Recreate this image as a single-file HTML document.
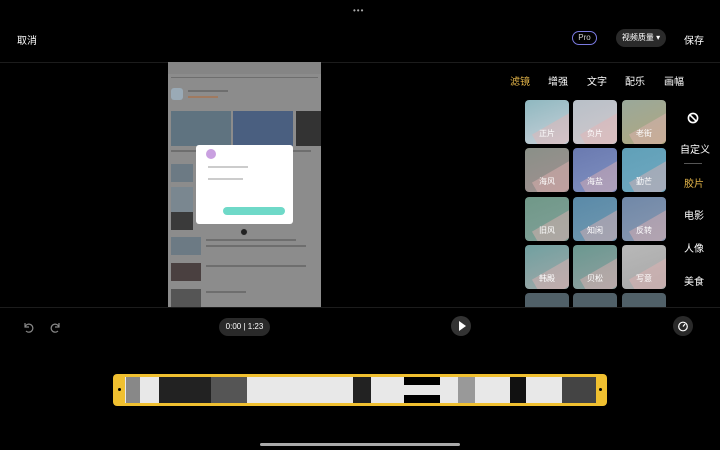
<!DOCTYPE html>
<html><head><meta charset="utf-8"><style>
*{margin:0;padding:0;box-sizing:border-box}
body{width:720px;height:450px;background:#000;overflow:hidden;position:relative;font-family:"Liberation Sans","Noto Sans CJK SC",sans-serif;color:#fff}
.a{position:absolute}
.t{font-size:10px;white-space:nowrap}
.tile{position:absolute;width:44px;height:44px;border-radius:4px;overflow:hidden}
.tile span{position:absolute;bottom:5px;width:100%;text-align:center;font-size:8px;color:#fff;z-index:2}
.tile:after{content:"";position:absolute;left:10px;top:22px;width:44px;height:24px;background:rgba(230,180,180,.45);transform:rotate(-30deg)}
.f{position:absolute;top:377px;height:26px}
.ln{position:absolute;height:2px;background:#6e6e6e}
</style></head><body>
<div class="a" style="left:353px;top:6px;font-size:8px;color:#aaa;letter-spacing:1px">•••</div>
<div class="a t" style="left:17px;top:32px;font-size:10px">取消</div>
<div class="a t" style="left:572px;top:31px;width:25px;height:14px;border:1px solid #7a7ae0;border-radius:8px;font-size:8px;text-align:center;line-height:12px;color:#ccc">Pro</div>
<div class="a t" style="left:616px;top:29px;width:50px;height:18px;background:#2a2a2a;border-radius:9px;font-size:8px;text-align:center;line-height:18px">视频质量 ▾</div>
<div class="a t" style="left:684px;top:32px;font-size:10px">保存</div>
<div class="a" style="left:0;top:62px;width:720px;height:1px;background:#1c1c1c"></div>
<div class="a" style="left:0;top:307px;width:720px;height:1px;background:#1c1c1c"></div>
<!-- preview -->
<div class="a" style="left:168px;top:62px;width:153px;height:245px;background:#8c8c8c;overflow:hidden">
 <div class="a" style="left:0;top:0;width:153px;height:12px;background:#858585"></div>
 <div class="ln" style="left:3px;top:15px;width:147px;height:1px"></div>
 <div class="a" style="left:3px;top:26px;width:12px;height:12px;background:#9aaab6;border-radius:3px"></div>
 <div class="ln" style="left:20px;top:28px;width:40px"></div>
 <div class="ln" style="left:20px;top:34px;width:30px;background:#a07a60"></div>
 <div class="a" style="left:3px;top:49px;width:60px;height:35px;background:#5f7380"></div>
 <div class="a" style="left:65px;top:49px;width:60px;height:35px;background:#4a5f80"></div>
 <div class="a" style="left:128px;top:49px;width:25px;height:35px;background:#333"></div>
 <div class="ln" style="left:3px;top:88px;width:140px"></div>
 <div class="a" style="left:3px;top:102px;width:22px;height:18px;background:#6c7a84"></div>
 <div class="a" style="left:3px;top:125px;width:22px;height:25px;background:#7a8790"></div>
 <div class="a" style="left:3px;top:150px;width:22px;height:18px;background:#3a3a3a"></div>
 <div class="a" style="left:3px;top:175px;width:30px;height:18px;background:#6c7a84"></div>
 <div class="ln" style="left:38px;top:177px;width:90px"></div>
 <div class="ln" style="left:38px;top:183px;width:100px"></div>
 <div class="a" style="left:3px;top:201px;width:30px;height:18px;background:#4a4040"></div>
 <div class="ln" style="left:38px;top:203px;width:100px"></div>
 <div class="a" style="left:3px;top:227px;width:30px;height:18px;background:#555"></div>
 <div class="ln" style="left:38px;top:229px;width:40px"></div>
 <div class="a" style="left:28px;top:83px;width:97px;height:79px;background:#fff;border-radius:3px">
  <div class="a" style="left:10px;top:4px;width:10px;height:10px;border-radius:50%;background:#c9a0e0"></div>
  <div class="a" style="left:12px;top:21px;width:40px;height:2px;background:#ccc"></div>
  <div class="a" style="left:12px;top:33px;width:35px;height:2px;background:#ccc"></div>
  <div class="a" style="left:27px;top:62px;width:62px;height:8px;border-radius:4px;background:#6fd9c8"></div>
 </div>
 <div class="a" style="left:72px;top:166px;width:8px;height:8px;border-radius:50%;background:#222;border:1px solid #888"></div>
</div>
<!-- tabs -->
<div class="a t" style="left:510px;top:73px;color:#e8b84a">滤镜</div>
<div class="a t" style="left:548px;top:73px">增强</div>
<div class="a t" style="left:587px;top:73px">文字</div>
<div class="a t" style="left:625px;top:73px">配乐</div>
<div class="a t" style="left:664px;top:73px">画幅</div>
<!-- grid -->
<div class="tile" style="left:525px;top:100px;background:linear-gradient(160deg,#8fb8c0,#c8d0d8)"><span>正片</span></div>
<div class="tile" style="left:573px;top:100px;background:linear-gradient(160deg,#b8c0c8,#d0c8cc)"><span>负片</span></div>
<div class="tile" style="left:622px;top:100px;background:linear-gradient(160deg,#9aa89a,#b0a880)"><span>老街</span></div>
<div class="tile" style="left:525px;top:148px;background:linear-gradient(160deg,#8a9088,#a09090)"><span>海风</span></div>
<div class="tile" style="left:573px;top:148px;background:linear-gradient(160deg,#6a7ab0,#8090c0)"><span>海盐</span></div>
<div class="tile" style="left:622px;top:148px;background:linear-gradient(160deg,#60a0b8,#70a8c0)"><span>勤芒</span></div>
<div class="tile" style="left:525px;top:197px;background:linear-gradient(160deg,#709888,#80a098)"><span>旧风</span></div>
<div class="tile" style="left:573px;top:197px;background:linear-gradient(160deg,#5a8aa8,#7098b0)"><span>知闲</span></div>
<div class="tile" style="left:622px;top:197px;background:linear-gradient(160deg,#7088a8,#8898b0)"><span>反转</span></div>
<div class="tile" style="left:525px;top:245px;background:linear-gradient(160deg,#70a0a0,#a0a8a8)"><span>韩殿</span></div>
<div class="tile" style="left:573px;top:245px;background:linear-gradient(160deg,#6a9890,#90a0a0)"><span>贝松</span></div>
<div class="tile" style="left:622px;top:245px;background:linear-gradient(160deg,#b8b8b8,#a8a8a8)"><span>写意</span></div>
<div class="a" style="left:525px;top:293px;width:44px;height:14px;background:#506068;border-radius:4px 4px 0 0"></div>
<div class="a" style="left:573px;top:293px;width:44px;height:14px;background:#506068;border-radius:4px 4px 0 0"></div>
<div class="a" style="left:622px;top:293px;width:44px;height:14px;background:#506068;border-radius:4px 4px 0 0"></div>
<!-- side -->
<svg class="a" style="left:687px;top:112px" width="12" height="12" viewBox="0 0 12 12"><circle cx="6" cy="6" r="4.6" fill="none" stroke="#fff" stroke-width="1.6"/><line x1="2.8" y1="2.8" x2="9.2" y2="9.2" stroke="#fff" stroke-width="1.6"/></svg>
<div class="a t" style="left:680px;top:141px">自定义</div>
<div class="a" style="left:684px;top:163px;width:18px;height:1px;background:#555"></div>
<div class="a t" style="left:684px;top:175px;color:#e8b84a">胶片</div>
<div class="a t" style="left:684px;top:207px">电影</div>
<div class="a t" style="left:684px;top:240px">人像</div>
<div class="a t" style="left:684px;top:273px">美食</div>
<!-- controls -->
<svg class="a" style="left:22px;top:321px" width="40" height="12" viewBox="0 0 40 12"><path d="M3 2v4h4M3 6a4 4 0 1 1 1 4" fill="none" stroke="#888" stroke-width="1.2"/><path d="M37 2v4h-4M37 6a4 4 0 1 0-1 4" fill="none" stroke="#888" stroke-width="1.2"/></svg>
<div class="a t" style="left:219px;top:318px;width:51px;height:18px;background:#2a2a2a;border-radius:9px;font-size:8px;text-align:center;line-height:18px">0:00 | 1:23</div>
<div class="a" style="left:451px;top:316px;width:20px;height:20px;border-radius:50%;background:#333"></div>
<div class="a" style="left:459px;top:321px;width:0;height:0;border-left:7px solid #fff;border-top:5px solid transparent;border-bottom:5px solid transparent"></div>
<div class="a" style="left:673px;top:316px;width:20px;height:20px;border-radius:50%;background:#2a2a2a"></div>
<svg class="a" style="left:677px;top:320px" width="12" height="12" viewBox="0 0 12 12"><circle cx="6" cy="6.5" r="4.3" fill="none" stroke="#fff" stroke-width="1.2"/><line x1="6" y1="6.5" x2="8" y2="4" stroke="#fff" stroke-width="1.2"/></svg>
<!-- timeline -->
<div class="a" style="left:113px;top:374px;width:494px;height:32px;background:#f0c030;border-radius:4px"></div>
<div class="a" style="left:118px;top:388px;width:3px;height:3px;border-radius:50%;background:#000"></div>
<div class="a" style="left:599px;top:388px;width:3px;height:3px;border-radius:50%;background:#000"></div>
<div class="a" style="left:125px;top:377px;width:471px;height:26px;background:#e8e8e8"></div>
<div class="f" style="left:126px;width:14px;background:#888"></div>
<div class="f" style="left:159px;width:52px;background:#222"></div>
<div class="f" style="left:211px;width:36px;background:#555"></div>
<div class="f" style="left:353px;width:18px;background:#222"></div>
<div class="f" style="left:404px;width:36px;background:#000;height:8px"></div>
<div class="f" style="left:404px;top:395px;width:36px;background:#000;height:8px"></div>
<div class="f" style="left:458px;width:17px;background:#999"></div>
<div class="f" style="left:510px;width:16px;background:#111"></div>
<div class="f" style="left:562px;width:34px;background:#444"></div>
<div class="a" style="left:260px;top:443px;width:200px;height:3px;border-radius:2px;background:#aaa"></div>
</body></html>
